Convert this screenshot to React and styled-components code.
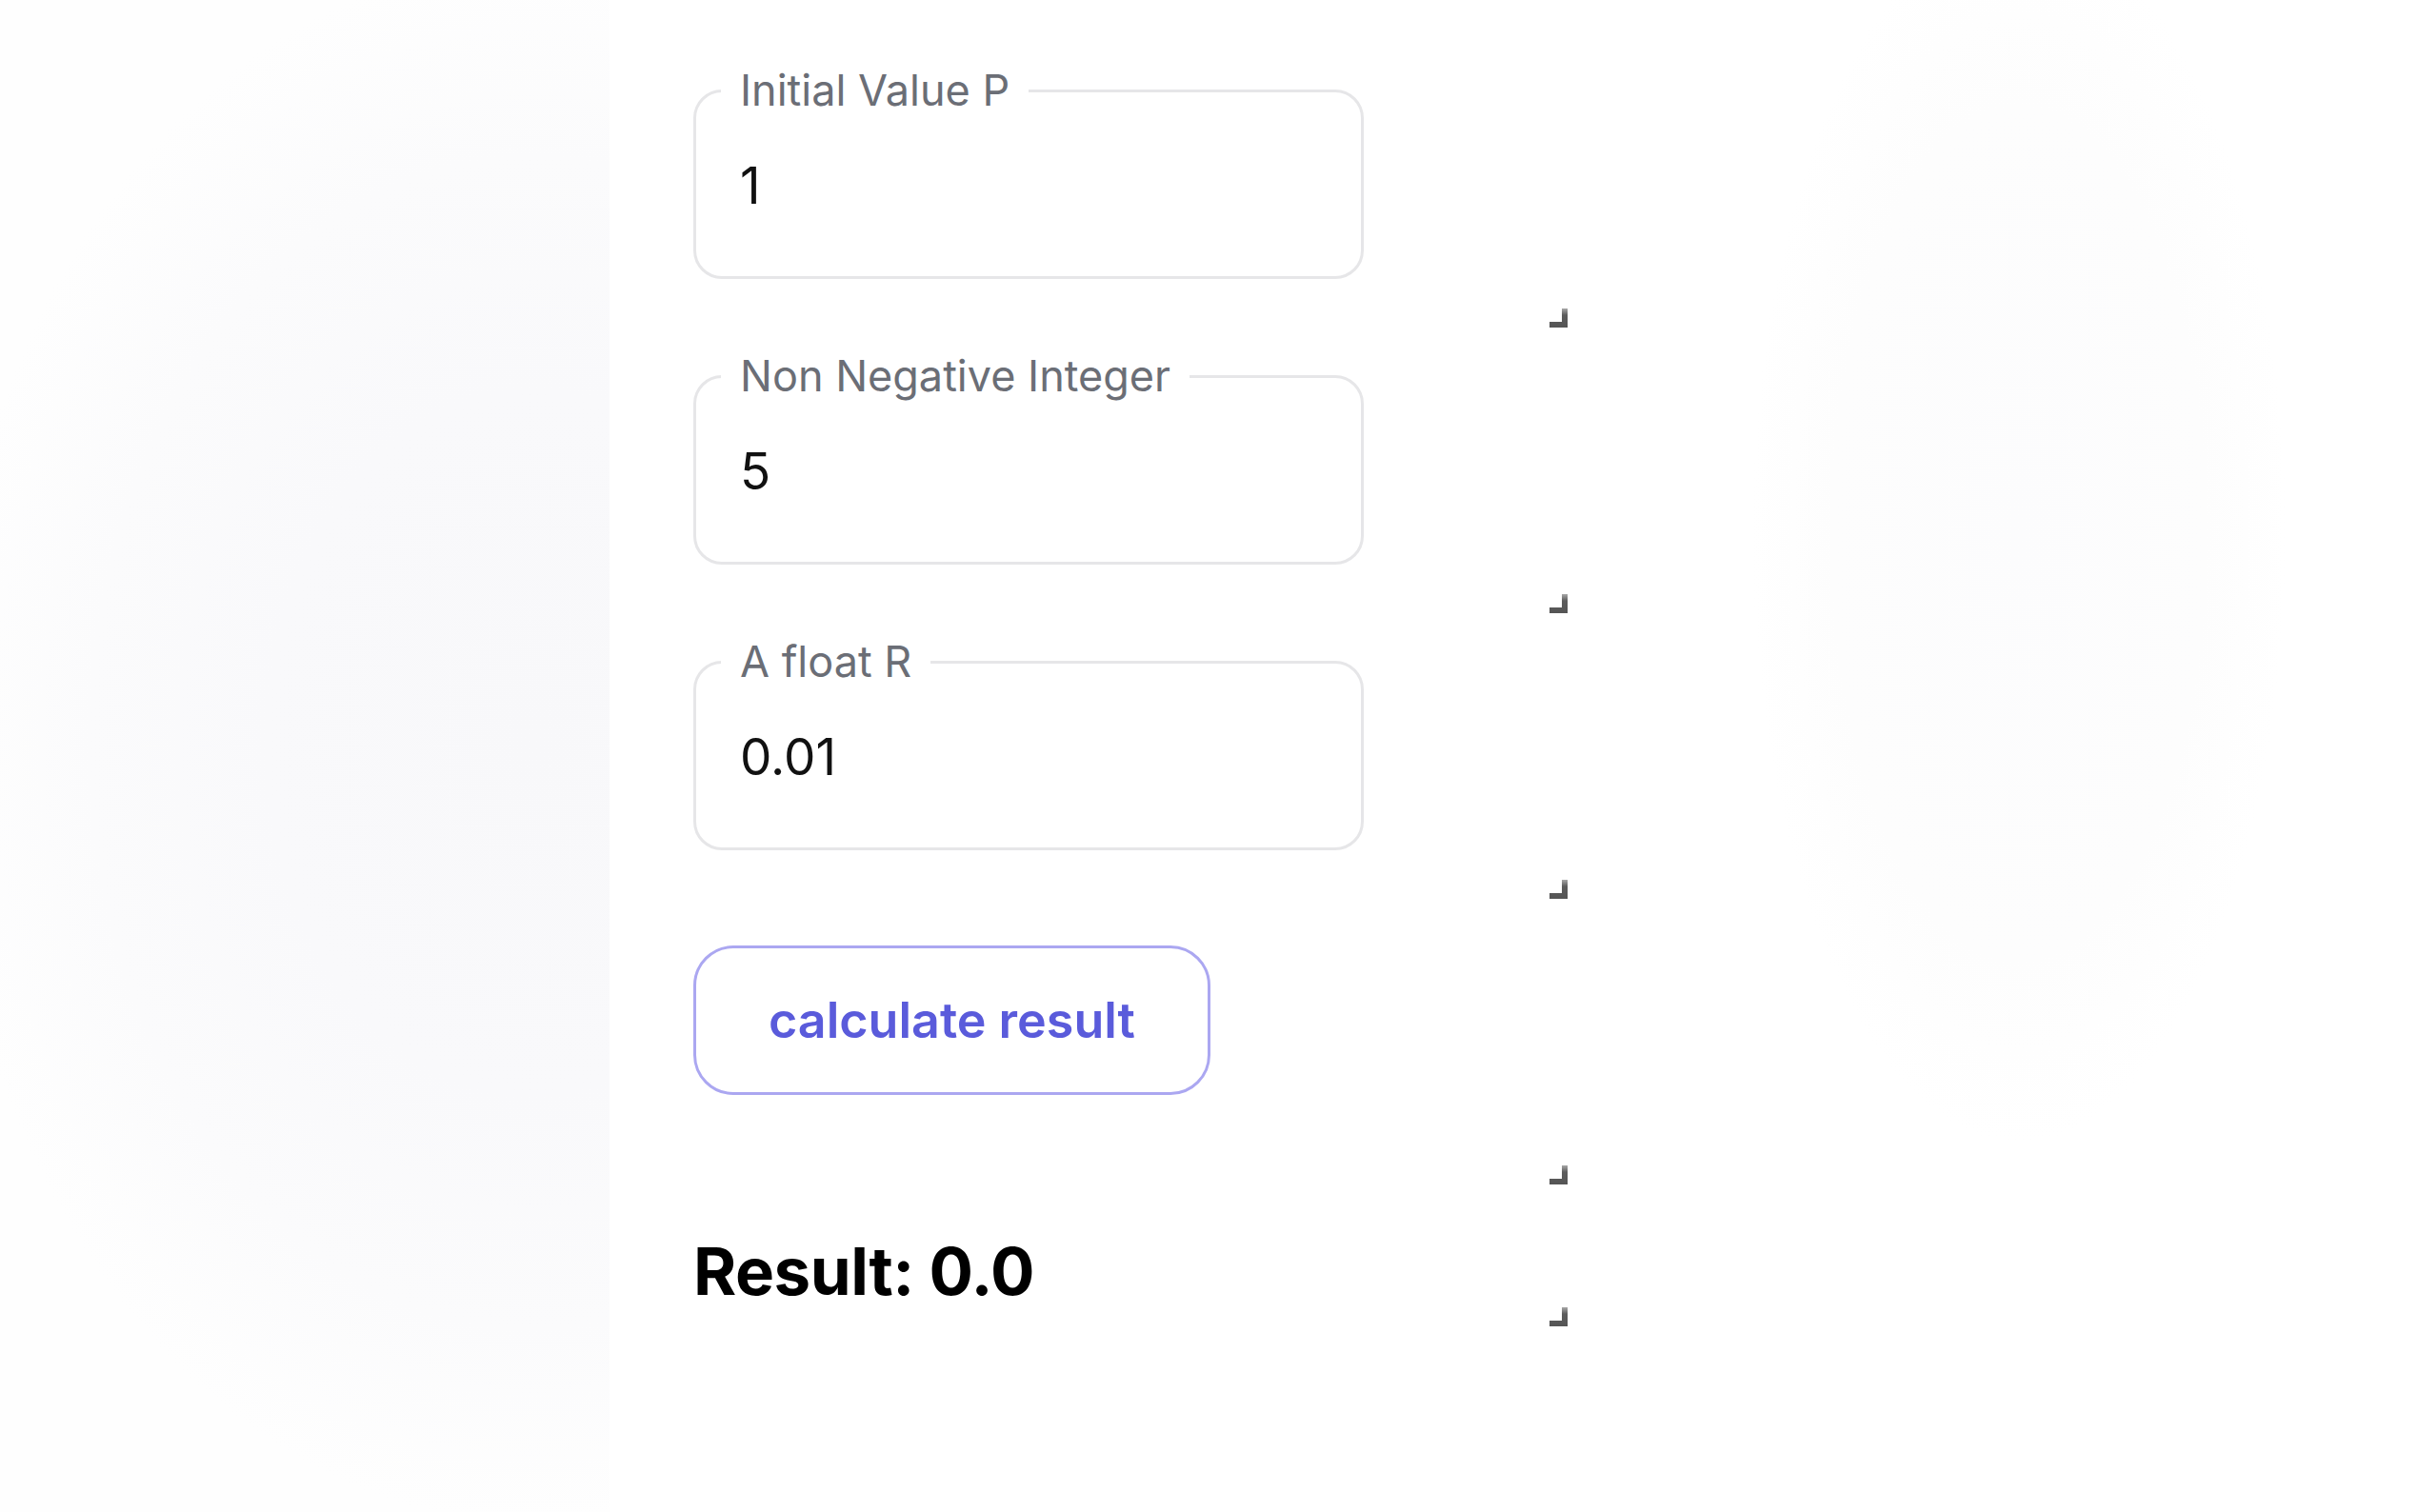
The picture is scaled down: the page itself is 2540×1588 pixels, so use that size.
import React from "react";
import styled, { createGlobalStyle } from "styled-components";

const GlobalStyle = createGlobalStyle`
  * {
    box-sizing: border-box;
  }
  html,
  body {
    margin: 0;
    padding: 0;
    background: #ffffff;
    font-family: Inter, "Noto Sans", "Liberation Sans", sans-serif;
  }
`;

const fields = [
  { label: "Initial Value P", value: "1" },
  { label: "Non Negative Integer", value: "5" },
  { label: "A float R", value: "0.01" },
];

const Grip = () => (
  <GripMark width="21" height="22" viewBox="0 0 21 22" aria-hidden="true">
    <defs>
      <linearGradient id="gripFade" x1="0" y1="0" x2="0" y2="1">
        <stop offset="0" stopColor="#a8a8a8" />
        <stop offset="0.35" stopColor="#5c5c5c" />
        <stop offset="1" stopColor="#555555" />
      </linearGradient>
    </defs>
    <path d="M14 1 H20 V21 H1 V15 H14 Z" fill="url(#gripFade)" />
  </GripMark>
);

const Field = ({ label, value }) => (
  <Row>
    <FieldBox>
      <Legend>{label}</Legend>
      <ValueInput type="text" defaultValue={value} />
    </FieldBox>
    <Grip />
  </Row>
);

const App = () => {
  return (
    <>
      <GlobalStyle />
      <Page>
        <Aside />
        <Main>
          {fields.map((f) => (
            <Field key={f.label} label={f.label} value={f.value} />
          ))}

          <Row>
            <CalcButton type="button">calculate result</CalcButton>
            <Grip />
          </Row>

          <Row short>
            <Result>Result: 0.0</Result>
            <Grip />
          </Row>
        </Main>
      </Page>
    </>
  );
};

export default App;

const Page = styled.div`
  display: grid;
  grid-template-columns: 640px 1fr;
  min-height: 1588px;
  background:
    radial-gradient(ellipse 280px 640px at 2120px 560px, #fcfcfd 0%, #fdfdfd 70%, rgba(255, 255, 255, 0) 100%),
    #ffffff;
`;

const Aside = styled.div`
  background:
    radial-gradient(ellipse 620px 820px at 560px 780px, #f8f8fa 0%, #f9f9fb 45%, #fbfbfc 75%, #fefefe 100%);
`;

const Main = styled.main`
  display: flex;
  flex-direction: column;
  padding: 45px 0 0 88px;
`;

const Row = styled.div`
  position: relative;
  width: 919px;
  height: ${(p) => (p.short ? "149px" : "300px")};
  padding-top: ${(p) => (p.short ? "49px" : "23px")};
`;

const GripMark = styled.svg`
  position: absolute;
  right: 0;
  bottom: 0;
  display: block;
`;

const FieldBox = styled.fieldset`
  width: 704px;
  margin: 0;
  padding: 0 46px 22px;
  border: 3px solid #e6e6e8;
  border-radius: 30px;
  background: #ffffff;
`;

const Legend = styled.legend`
  margin-left: -20px;
  padding: 0 20px;
  font-size: 45px;
  line-height: 54px;
  font-weight: 400;
  color: #6b6e76;
`;

const ValueInput = styled.input`
  display: block;
  width: 100%;
  height: 146px;
  margin: 0;
  padding: 0;
  border: none;
  outline: none;
  background: transparent;
  font-family: Inter, "Noto Sans", "Liberation Sans", sans-serif;
  font-size: 53px;
  color: #111111;
`;

const CalcButton = styled.button`
  display: block;
  width: 543px;
  height: 157px;
  margin-top: 25px;
  padding: 0;
  border: 3px solid #aba7f1;
  border-radius: 42px;
  background: #ffffff;
  font-family: Inter, "Noto Sans", "Liberation Sans", sans-serif;
  font-size: 52px;
  font-weight: 600;
  color: #5a5bdb;
  cursor: pointer;
`;

const Result = styled.div`
  font-size: 69px;
  line-height: 82px;
  font-weight: 700;
  color: #000000;
  letter-spacing: -0.5px;
`;
